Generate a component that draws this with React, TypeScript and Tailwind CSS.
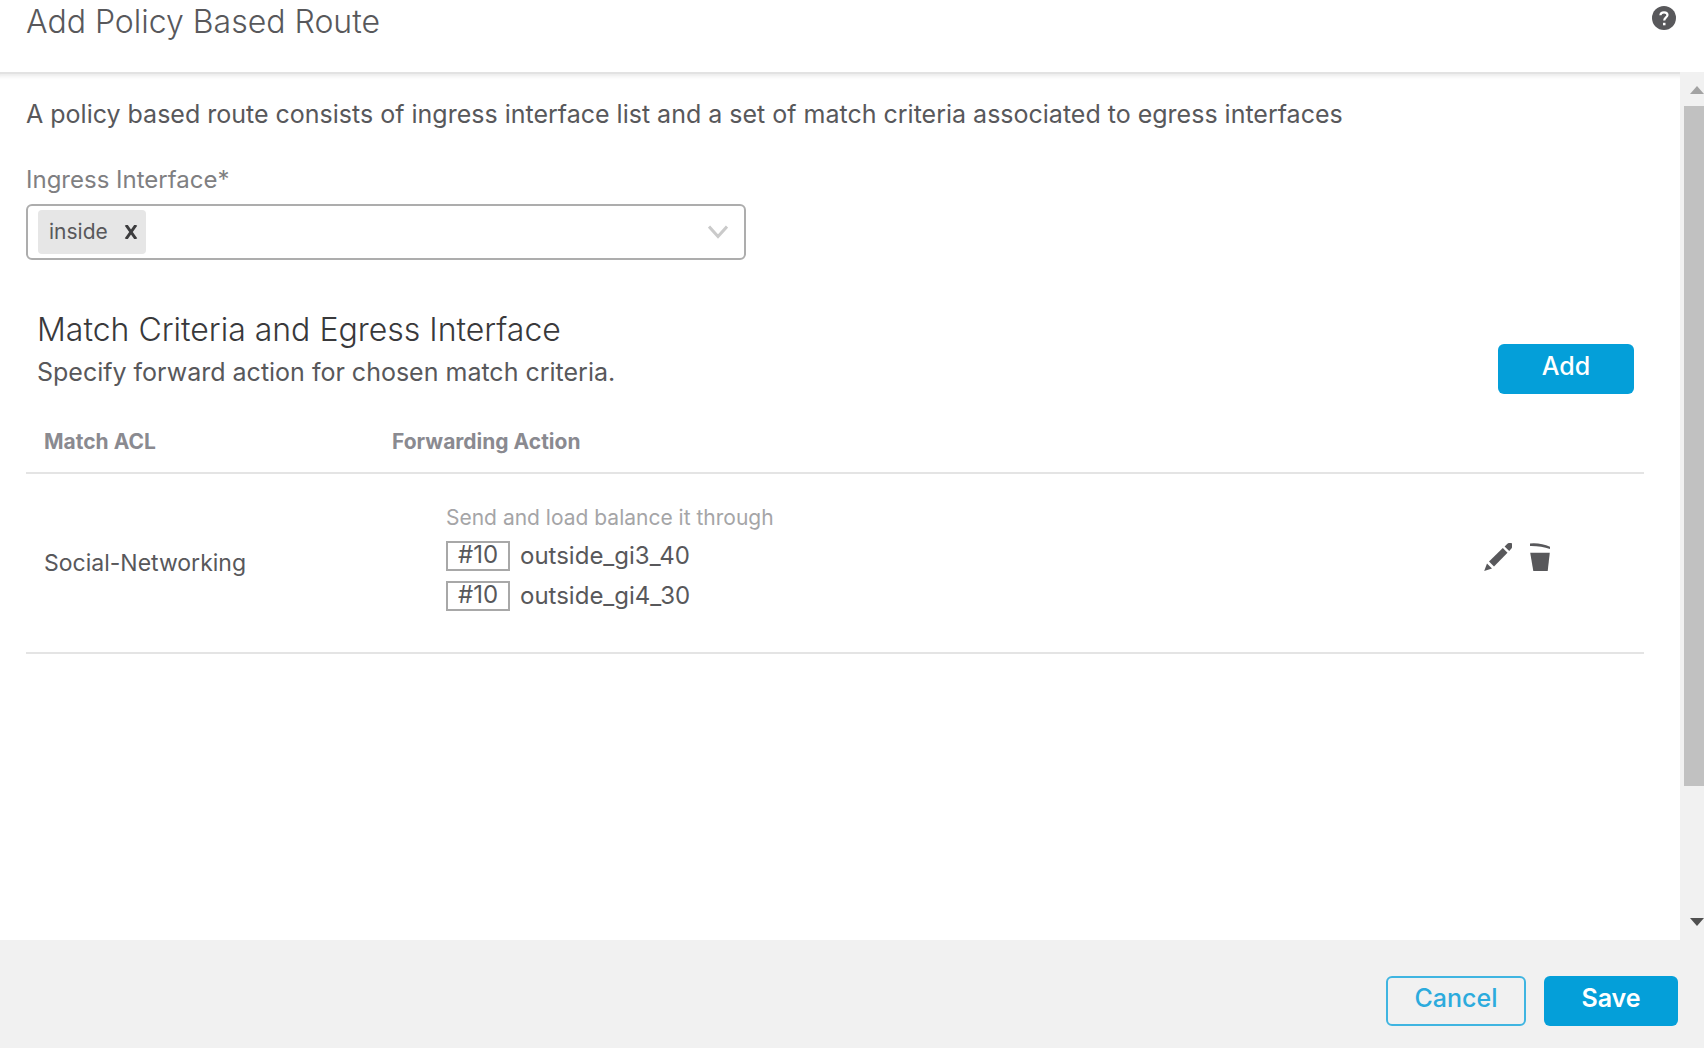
import { useState } from "react";

const forwardingTargets = [
  { metric: "#10", name: "outside_gi3_40" },
  { metric: "#10", name: "outside_gi4_30" },
];

function HelpIcon() {
  return (
    <svg viewBox="0 0 24 24" className="size-6" aria-hidden="true">
      <circle cx="12" cy="12" r="12" fill="#58585b" />
      <path d="M8.400 9.200c.1-1.800 1.500-2.800 3.600-2.800 2 0 3.500 1 3.500 2.700 0 2.300-3.300 2.500-3.300 5.400" fill="none" stroke="#fff" strokeWidth="2.200" />
      <rect x="11" y="16.800" width="2.500" height="2.500" fill="#fff" />
    </svg>
  );
}

function PencilIcon() {
  return (
    <svg viewBox="0 0 28 28" className="size-7" fill="#58585b" aria-hidden="true">
      <path d="M.2 28 3 20.500 8 25.500z" />
      <path d="M5 18.500 18.800 5 23.500 9.700 10 23.500z" />
      <path d="M20.600 3.400 23.400.700Q24 .100 25 .100H27.200Q28 .100 28 1V4Q28 5 27.400 5.600L25.200 8z" />
    </svg>
  );
}

function TrashIcon() {
  return (
    <svg viewBox="0 0 20 28" className="h-7 w-5" fill="#58585b" aria-hidden="true">
      <path d="M0 .400Q11-.500 20 3.800V6Q11 2.800 0 3z" />
      <path d="M.200 9.800H19.800L17.700 28H3.300z" />
    </svg>
  );
}

export default function App() {
  const [interfaces, setInterfaces] = useState(["inside"]);

  return (
    <div className="flex h-screen flex-col overflow-hidden bg-white font-['Inter','Liberation_Sans',sans-serif] text-[#58585b]">
      <header className="flex h-18 shrink-0 items-start justify-between pr-7 pl-[26px]">
        <h1 className="pt-0.5 text-[32px] leading-10 font-light">Add Policy Based Route</h1>
        <button type="button" aria-label="Help" className="mt-1.5">
          <HelpIcon />
        </button>
      </header>

      <div className="flex min-h-0 flex-1">
        <main className="min-w-0 flex-1 border-t-2 border-[#e2e2e2] pr-9 pl-[26px] shadow-[inset_0_6px_4px_-4px_#e8e8e8]">
          <p className="pt-6 text-[25px] leading-8">
            A policy based route consists of ingress interface list and a set of match criteria associated to egress
            interfaces
          </p>

          <label htmlFor="ingress" className="mt-[34px] block text-2xl leading-8 text-[#7f7f82]">
            Ingress Interface*
          </label>
          <div className="mt-2 flex h-14 max-w-[720px] items-center rounded-md border-2 border-[#adadad] pr-4 pl-2.5">
            {interfaces.map((name) => (
              <span key={name} className="flex h-11 items-center gap-4 rounded-sm bg-[#e6e6e6] pr-2 pl-[11px]">
                <span className="text-[21px] leading-8">{name}</span>
                <button
                  type="button"
                  aria-label={`Remove ${name}`}
                  onClick={() => setInterfaces(interfaces.filter((n) => n !== name))}
                >
                  <svg viewBox="0 0 14 14" className="size-3.5" stroke="#3c3c3e" strokeWidth="3" aria-hidden="true">
                    <path d="M2 0 12 14M12 0 2 14" />
                  </svg>
                </button>
              </span>
            ))}
            <input id="ingress" type="text" className="h-full min-w-0 flex-1 px-2 text-[21px] outline-none" />
            <button type="button" aria-label="Show interfaces">
              <svg viewBox="0 0 20 14" className="h-3.5 w-5" fill="none" stroke="#cacaca" strokeWidth="3" aria-hidden="true">
                <path d="M1 1.500 10 11.500 19 1.500" />
              </svg>
            </button>
          </div>

          <section>
            <div className="mt-[50px] flex items-end justify-between pr-2.5 pl-[11px]">
              <div>
                <h2 className="text-[32px] leading-10 font-light text-[#39393b]">Match Criteria and Egress Interface</h2>
                <p className="mt-1.5 pb-1.5 text-[25px] leading-8">Specify forward action for chosen match criteria.</p>
              </div>
              <button
                type="button"
                className="h-[50px] w-[136px] rounded-md bg-[#049fd9] pb-1.5 text-[25px] leading-8 font-medium text-white"
              >
                Add
              </button>
            </div>

            <table className="mt-8 w-full table-fixed text-left text-[21px] leading-8">
              <colgroup>
                <col className="w-[348px]" />
                <col />
                <col className="w-[180px]" />
              </colgroup>
              <thead>
                <tr className="h-[47px] border-b-2 border-[#e4e4e4] align-top text-[#8a8a90]">
                  <th className="pl-[18px] font-bold">Match ACL</th>
                  <th className="pl-[18px] font-bold">Forwarding Action</th>
                  <th aria-label="Actions" />
                </tr>
              </thead>
              <tbody>
                <tr className="h-[180px] border-b-2 border-[#e4e4e4]">
                  <td className="pl-[18px] text-[23px]">Social-Networking</td>
                  <td className="pb-3 pl-18">
                    <p className="text-[#a5a5a7]">Send and load balance it through</p>
                    <ul className="mt-1.5 grid gap-2 text-2xl leading-8">
                      {forwardingTargets.map((target) => (
                        <li key={target.name} className="flex h-8 items-center gap-2.5">
                          <span className="flex h-[30px] w-16 items-center justify-center border-2 border-[#a8a8a8] pb-0.5">
                            {target.metric}
                          </span>
                          {target.name}
                        </li>
                      ))}
                    </ul>
                  </td>
                  <td className="pb-3 pl-5">
                    <div className="flex gap-[18px]">
                      <button type="button" aria-label="Edit">
                        <PencilIcon />
                      </button>
                      <button type="button" aria-label="Delete">
                        <TrashIcon />
                      </button>
                    </div>
                  </td>
                </tr>
              </tbody>
            </table>
          </section>
        </main>

        <div aria-hidden="true" className="flex w-6 shrink-0 flex-col bg-[#f1f1f1] pl-1">
          <svg viewBox="0 0 20 34" className="h-[34px] w-5" fill="#a3a3a3">
            <path d="M6 22 13 14 20 22z" />
          </svg>
          <div className="min-h-0 flex-[680] bg-[#c1c1c1]" />
          <div className="min-h-0 flex-[120]" />
          <svg viewBox="0 0 20 34" className="h-[34px] w-5" fill="#505050">
            <path d="M6 12 13 20 20 12z" />
          </svg>
        </div>
      </div>

      <footer className="flex h-27 shrink-0 items-start justify-end gap-[18px] bg-[#f1f1f1] pt-9 pr-[26px]">
        <button
          type="button"
          className="h-[50px] w-[140px] rounded-md border-2 border-[#3fb5e1] pb-1.5 text-[25px] leading-8 font-medium text-[#2cabdd]"
        >
          Cancel
        </button>
        <button
          type="button"
          className="h-[50px] w-[134px] rounded-md bg-[#049fd9] pb-1.5 text-[25px] leading-8 font-semibold text-white"
        >
          Save
        </button>
      </footer>
    </div>
  );
}
